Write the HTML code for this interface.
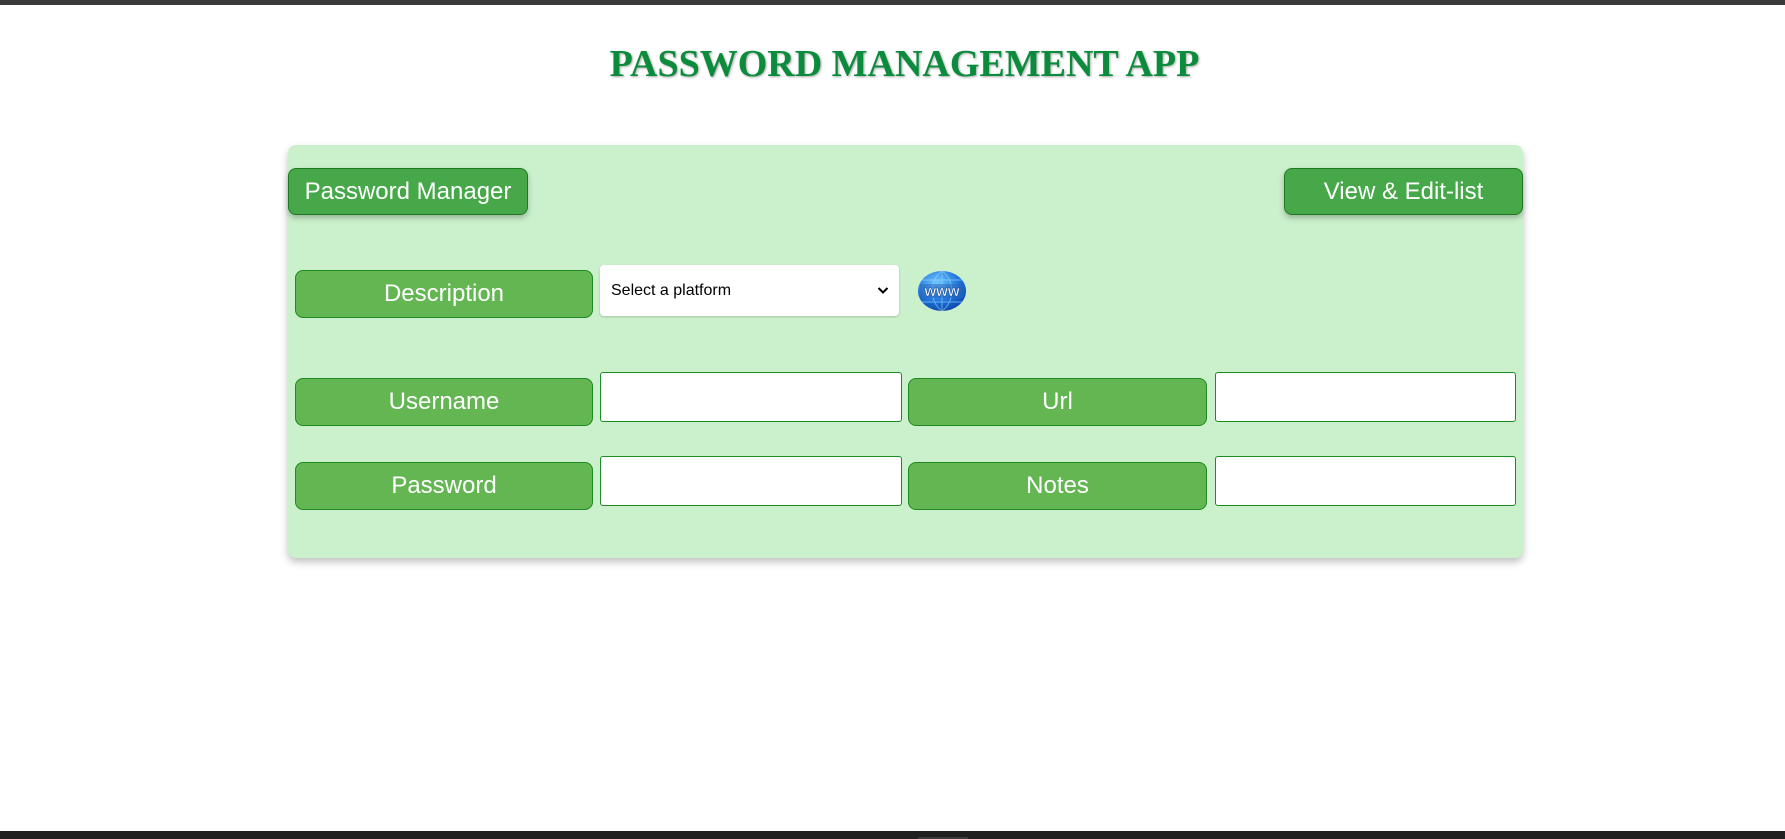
<!DOCTYPE html>
<html><head><meta charset="utf-8"><style>
*{box-sizing:border-box;margin:0;padding:0}
body{width:1785px;height:839px;background:#fff;position:relative;overflow:hidden;font-family:"Liberation Sans",Arial,sans-serif}
.abs{position:absolute}
.top{left:0;top:0;width:1785px;height:5px;background:#3a3a3a}
.bot{left:0;top:831px;width:1785px;height:8px;background:#202020}
h1{position:absolute;left:12px;width:1785px;top:42px;text-align:center;font-family:"Liberation Serif",serif;font-weight:bold;font-size:38px;color:#0a8c3c;text-shadow:1px 1px 2px rgba(0,0,0,.35)}
.panel{left:288px;top:145px;width:1235px;height:413px;background:#cbf0cc;border-radius:8px;box-shadow:0 4px 8px rgba(0,0,0,.25)}
.btn{background:#47a84a;border:1px solid #1e7a22;border-radius:8px;color:#fff;font-size:24px;display:flex;align-items:center;justify-content:center;box-shadow:0 3px 6px rgba(0,0,0,.25)}
.lbl{background:#64b653;border:1px solid #1e8a22;border-radius:8px;color:#fff;font-size:24px;display:flex;align-items:center;justify-content:center}
.inp{background:#fff;border:1px solid #1e8a22;border-radius:3px}
.sel{background:#fff;border-radius:4px;font-size:16px;color:#000;display:flex;align-items:center;padding-left:11px;box-shadow:0 1px 2px rgba(0,0,0,.2)}
</style></head><body>
<div class="abs top"></div>
<h1>PASSWORD MANAGEMENT APP</h1>
<div class="abs panel"></div>
<div class="abs btn" style="left:288px;top:168px;width:240px;height:47px">Password Manager</div>
<div class="abs btn" style="left:1284px;top:168px;width:239px;height:47px">View &amp; Edit-list</div>
<div class="abs lbl" style="left:295px;top:270px;width:298px;height:48px">Description</div>
<div class="abs sel" style="left:600px;top:265px;width:299px;height:51px">Select a platform
<svg style="position:absolute;right:10px;top:21px" width="12" height="9" viewBox="0 0 12 9"><path d="M1.5 2 L6 6.5 L10.5 2" stroke="#000" stroke-width="2" fill="none"/></svg></div>
<svg class="abs" style="left:917px;top:270px" width="50" height="42" viewBox="0 0 50 42">
<defs><radialGradient id="g" cx="0.4" cy="0.3" r="0.8"><stop offset="0" stop-color="#6fc8ff"/><stop offset="0.6" stop-color="#1a6fd8"/><stop offset="1" stop-color="#0b3f9a"/></radialGradient></defs>
<ellipse cx="25" cy="21" rx="24" ry="20" fill="url(#g)"/>
<path d="M25 1 V41 M5 10 H45 M5 32 H45 M25 1 C12 10 12 32 25 41 M25 1 C38 10 38 32 25 41" stroke="#9fd8ff" stroke-width="1" fill="none" opacity=".6"/>
<rect x="3" y="14" width="44" height="14" fill="#2a63b8" opacity=".5"/>
<text x="25" y="26" text-anchor="middle" font-family="Liberation Sans,sans-serif" font-weight="bold" font-size="15" fill="#fff" stroke="#124a9a" stroke-width=".5">www</text>
</svg>
<div class="abs lbl" style="left:295px;top:378px;width:298px;height:48px">Username</div>
<div class="abs inp" style="left:600px;top:372px;width:302px;height:50px"></div>
<div class="abs lbl" style="left:908px;top:378px;width:299px;height:48px">Url</div>
<div class="abs inp" style="left:1215px;top:372px;width:301px;height:50px"></div>
<div class="abs lbl" style="left:295px;top:462px;width:298px;height:48px">Password</div>
<div class="abs inp" style="left:600px;top:456px;width:302px;height:50px"></div>
<div class="abs lbl" style="left:908px;top:462px;width:299px;height:48px">Notes</div>
<div class="abs inp" style="left:1215px;top:456px;width:301px;height:50px"></div>
<div class="abs bot"></div>
<div class="abs" style="left:918px;top:837px;width:50px;height:2px;background:#3a3a3a"></div>
</body></html>
